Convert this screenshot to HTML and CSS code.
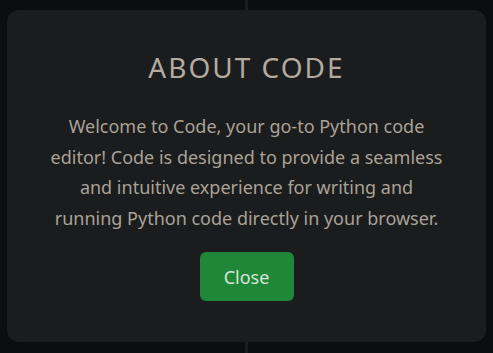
FILE: index.html
```html
<!DOCTYPE html>
<html lang="en">
<head>
    <meta charset="UTF-8">
    <meta name="viewport" content="width=device-width, initial-scale=1.0">
    <title>Code</title>
    <link rel="stylesheet" href="styles.css">
</head>
<body>
    <div class="workspace">
        <div class="pane"></div>
        <div class="divider"></div>
        <div class="pane"></div>
    </div>

    <div class="modal">
        <h2 class="modal-title">ABOUT CODE</h2>
        <p class="modal-text">
            Welcome to Code, your go-to Python code editor! Code is designed to provide a seamless and intuitive experience for writing and running Python code directly in your browser.
        </p>
        <button class="close-button">Close</button>
    </div>
</body>
</html>
```

FILE: styles.css
```css
body {
    margin: 0;
    padding: 0;
    font-family: 'Noto Sans', 'Open Sans', sans-serif;
    background-color: #0c0d0e;
    width: 493px;
    height: 353px;
    overflow: hidden;
    position: relative;
}
.workspace {
    display: flex;
    height: 100%;
}
.pane {
    flex: 1;
    background-color: #0c0d0e;
}
.divider {
    width: 3px;
    background-color: #1b1c1e;
}
.modal {
    position: absolute;
    top: 10px;
    left: 7px;
    width: 479px;
    height: 332px;
    box-sizing: border-box;
    background-color: #1b1c1e;
    border-radius: 12px;
    display: flex;
    flex-direction: column;
    align-items: center;
    padding: 43px 40px 0;
    text-align: center;
}
.modal-title {
    margin: 0;
    font-size: 28px;
    font-weight: normal;
    letter-spacing: 2px;
    line-height: 1;
    color: #b3aba0;
}
.modal-text {
    margin: 30px 0 19px;
    font-size: 18px;
    line-height: 1.7;
    color: #a9a297;
}
.close-button {
    width: 94px;
    height: 49px;
    background-color: #1f8838;
    color: #d8e4da;
    border: none;
    border-radius: 6px;
    font-family: inherit;
    font-size: 18px;
    cursor: pointer;
}
```
